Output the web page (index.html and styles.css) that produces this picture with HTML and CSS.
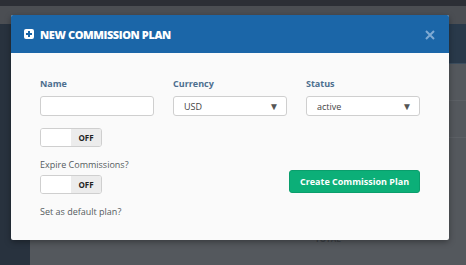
FILE: index.html
```html
<!DOCTYPE html>
<html>
<head>
<meta charset="utf-8">
<link rel="stylesheet" href="styles.css">
</head>
<body>
<div class="page">
  <div class="topbar"></div>
  <div class="subbar"></div>
  <div class="main">
    <div class="sidebar"></div>
    <div class="content">
      <div class="table-head"></div>
      <div class="table-row"></div>
      <div class="table-row"></div>
      <div class="total">TOTAL</div>
    </div>
  </div>
</div>

<div class="modal">
  <div class="modal-header">
    <span class="plus-icon">
      <svg width="10" height="10" viewBox="0 0 10 10"><rect x="0" y="0" width="10" height="10" rx="2" fill="#fff"/><rect x="4" y="2" width="2" height="6" fill="#1b66a8"/><rect x="2" y="4" width="6" height="2" fill="#1b66a8"/></svg>
    </span>
    <span class="title">NEW COMMISSION PLAN</span>
    <span class="close">
      <svg width="10" height="10" viewBox="0 0 10 10"><path d="M1 1 L9 9 M9 1 L1 9" stroke="#7faad3" stroke-width="2"/></svg>
    </span>
  </div>
  <div class="modal-body">
    <div class="fields">
      <div class="field">
        <label class="label">Name</label>
        <div class="input"></div>
      </div>
      <div class="field">
        <label class="label">Currency</label>
        <div class="input select"><span>USD</span><span class="arrow">▼</span></div>
      </div>
      <div class="field">
        <label class="label">Status</label>
        <div class="input select"><span>active</span><span class="arrow">▼</span></div>
      </div>
    </div>
    <div class="bottom">
      <div class="options">
        <div class="toggle first"><span class="knob"></span><span class="off">OFF</span></div>
        <div class="opt-label">Expire Commissions?</div>
        <div class="toggle"><span class="knob"></span><span class="off">OFF</span></div>
        <div class="opt-label">Set as default plan?</div>
      </div>
      <button class="create">Create Commission Plan</button>
    </div>
  </div>
</div>
</body>
</html>
```
FILE: styles.css
```css
* { box-sizing: border-box; }
html, body { margin: 0; padding: 0; }
body {
  width: 466px;
  height: 265px;
  overflow: hidden;
  font-family: "Open Sans", "Liberation Sans", sans-serif;
  background: #53575c;
  position: relative;
}
.page { display: flex; flex-direction: column; height: 265px; }
.topbar { height: 6px; background: #2c2f36; }
.subbar { height: 18px; background: #4b4e53; }
.main { flex: 1; display: flex; }
.sidebar { width: 30px; background: #28323e; }
.content { flex: 1; background: #54585d; display: flex; flex-direction: column; }
.table-head { height: 40px; background: #29394a; border-bottom: 1px solid #3b4d5e; }
.table-row { height: 37px; border-bottom: 1px solid #5c6065; }
.total { margin: 96px 0 0 285px; font-size: 8px; line-height: 10px; color: #3d4146; font-weight: bold; }

.modal {
  position: absolute;
  left: 11px;
  top: 15px;
  width: 438px;
  height: 225px;
  background: #fafafa;
  box-shadow: 0 2px 6px rgba(0,0,0,0.35);
  border-radius: 2px;
  overflow: hidden;
}
.modal-header {
  height: 38px;
  background: #1b66a8;
  display: flex;
  align-items: center;
  padding: 0 13px;
  gap: 6px;
}
.plus-icon { display: flex; width: 10px; height: 10px; margin-top: -1px; }
.title {
  color: #fff;
  font-weight: 800;
  font-size: 11px;
  letter-spacing: -0.4px;
  flex: 1;
}
.close { display: flex; margin-right: 1px; margin-top: 1px; }

.modal-body { padding: 25px 29px 24px 29px; }
.fields {
  display: grid;
  grid-template-columns: 114px 114px 114px;
  column-gap: 19px;
}
.field { display: flex; flex-direction: column; }
.label {
  font-size: 9px;
  font-weight: bold;
  color: #4d6f8f;
  line-height: 12px;
  height: 12px;
  margin-bottom: 6px;
}
.input {
  height: 20px;
  background: #fff;
  border: 1px solid #cfcfcf;
  border-radius: 3px;
}
.select {
  display: flex;
  align-items: center;
  justify-content: space-between;
  padding: 0 7px 0 10px;
  font-size: 9px;
  color: #444;
}
.arrow { font-size: 10px; color: #555; }

.bottom { display: flex; justify-content: space-between; }
.options { display: flex; flex-direction: column; align-items: flex-start; }
.toggle {
  display: flex;
  width: 62px;
  height: 19px;
  border: 1px solid #cfcfcf;
  border-radius: 3px;
  overflow: hidden;
  margin-top: 4px;
}
.toggle.first { margin-top: 12px; }
.knob { width: 30px; background: #fff; }
.off {
  flex: 1;
  background: #ececec;
  font-size: 8px;
  font-weight: bold;
  color: #222;
  display: flex;
  align-items: center;
  justify-content: center;
}
.opt-label {
  font-size: 9px;
  color: #555a60;
  line-height: 12px;
  margin-top: 12px;
}
.create {
  margin-top: 54px;
  align-self: flex-start;
  width: 131px;
  height: 23px;
  background: #0caf78;
  border: 1px solid #0a9e6c;
  border-radius: 3px;
  color: #fff;
  font-family: "Open Sans", "Liberation Sans", sans-serif;
  font-weight: bold;
  font-size: 9px;
  padding: 0;
}
```
